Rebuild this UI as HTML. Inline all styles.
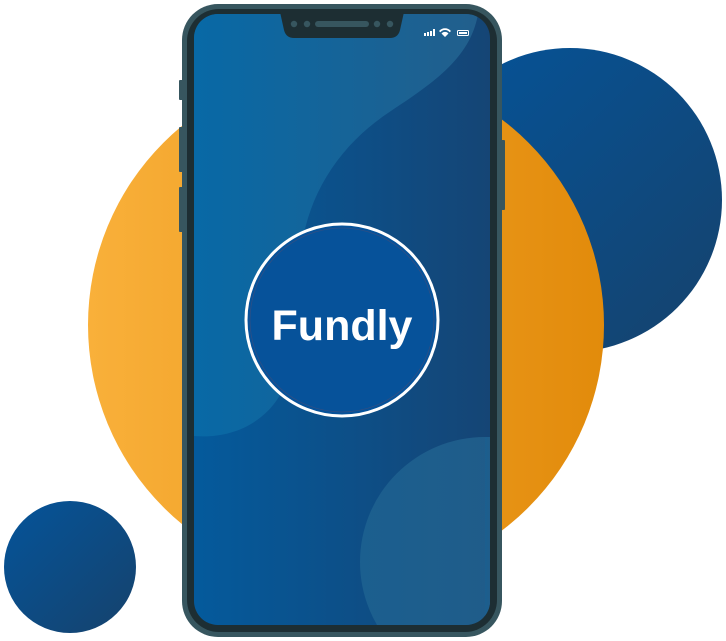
<!DOCTYPE html>
<html><head><meta charset="utf-8"><style>
html,body{margin:0;padding:0;background:#fff;width:726px;height:641px;overflow:hidden}
svg{display:block;position:absolute;left:0;top:0}
</style></head><body>
<svg width="726" height="641" viewBox="0 0 726 641" xmlns="http://www.w3.org/2000/svg">
<defs>
<linearGradient id="org" x1="0" x2="1" y1="0" y2="0"><stop offset="0" stop-color="#f9b03a"/><stop offset="1" stop-color="#e28b0b"/></linearGradient>
<linearGradient id="bl" x1="0" x2="1" y1="0" y2="1"><stop offset="0" stop-color="#04549a"/><stop offset="1" stop-color="#16426c"/></linearGradient>
<linearGradient id="scr" x1="0" x2="1"><stop offset="0" stop-color="#045a9c"/><stop offset="1" stop-color="#154575"/></linearGradient>
<linearGradient id="lt" x1="0" x2="1"><stop offset="0" stop-color="#0869a6"/><stop offset="1" stop-color="#225f8c"/></linearGradient>
<linearGradient id="lc" x1="0" x2="1"><stop offset="0" stop-color="#1b5f8f"/><stop offset="1" stop-color="#245a85"/></linearGradient>
<clipPath id="sc"><rect x="194" y="14" width="296" height="611" rx="24"/></clipPath>
</defs>
<circle cx="570" cy="200" r="152" fill="url(#bl)"/>
<circle cx="346" cy="325" r="258" fill="url(#org)"/>
<circle cx="70" cy="567" r="66" fill="url(#bl)"/>
<rect x="179" y="80" width="5" height="20" rx="1" fill="#37565f"/>
<rect x="179" y="127" width="5" height="45" rx="1" fill="#37565f"/>
<rect x="179" y="187" width="5" height="45" rx="1" fill="#37565f"/>
<rect x="500" y="140" width="5" height="70" rx="1" fill="#37565f"/>
<rect x="182" y="4" width="320" height="633" rx="36" fill="#37565f"/>
<rect x="187" y="9" width="310" height="623" rx="32" fill="#1d2e33"/>
<g clip-path="url(#sc)">
<rect x="194" y="14" width="296" height="611" fill="url(#scr)"/>
<path d="M194,14 L478,14 C470,60 430,85 385,115 C335,150 305,200 300,260 L292,360 C285,410 245,440 194,436 Z" fill="url(#lt)"/>
<circle cx="485" cy="562" r="125" fill="url(#lc)"/>
<rect x="485" y="437" width="10" height="200" fill="url(#lc)"/>
</g>
<path d="M280,12 L404,12 L400,30 Q398,38 390,38 L294,38 Q286,38 284,30 Z" fill="#1d2e33"/>
<circle cx="294" cy="24" r="3.2" fill="#37565f"/><circle cx="307" cy="24" r="3.2" fill="#37565f"/>
<rect x="315" y="21" width="54" height="6" rx="3" fill="#37565f"/>
<circle cx="377" cy="24" r="3.2" fill="#37565f"/><circle cx="390" cy="24" r="3.2" fill="#37565f"/>
<g fill="#fff">
<rect x="424" y="33" width="2" height="3"/><rect x="427" y="32" width="2" height="4"/><rect x="430" y="31" width="2" height="5"/><rect x="433" y="29" width="2" height="7"/>
<path d="M439,31 a8,8 0 0 1 12,0 l-1.3,1.3 a6,6 0 0 0 -9.4,0 Z M441.5,33.5 a4.5,4.5 0 0 1 7,0 L445,37 Z"/>
<rect x="457.5" y="30.5" width="11" height="5" rx="1" fill="none" stroke="#fff" stroke-width="1"/><rect x="459" y="32" width="8" height="2"/>
</g>
<circle cx="342" cy="320" r="96" fill="#06529a" stroke="#fff" stroke-width="3"/>
<circle cx="342" cy="320" r="92" fill="none" stroke="#2e4f85" stroke-width="0.8"/>
<text x="342" y="340" text-anchor="middle" font-family="Liberation Sans, sans-serif" font-weight="bold" font-size="43" fill="#fff">Fundly</text>
</svg>
</body></html>
